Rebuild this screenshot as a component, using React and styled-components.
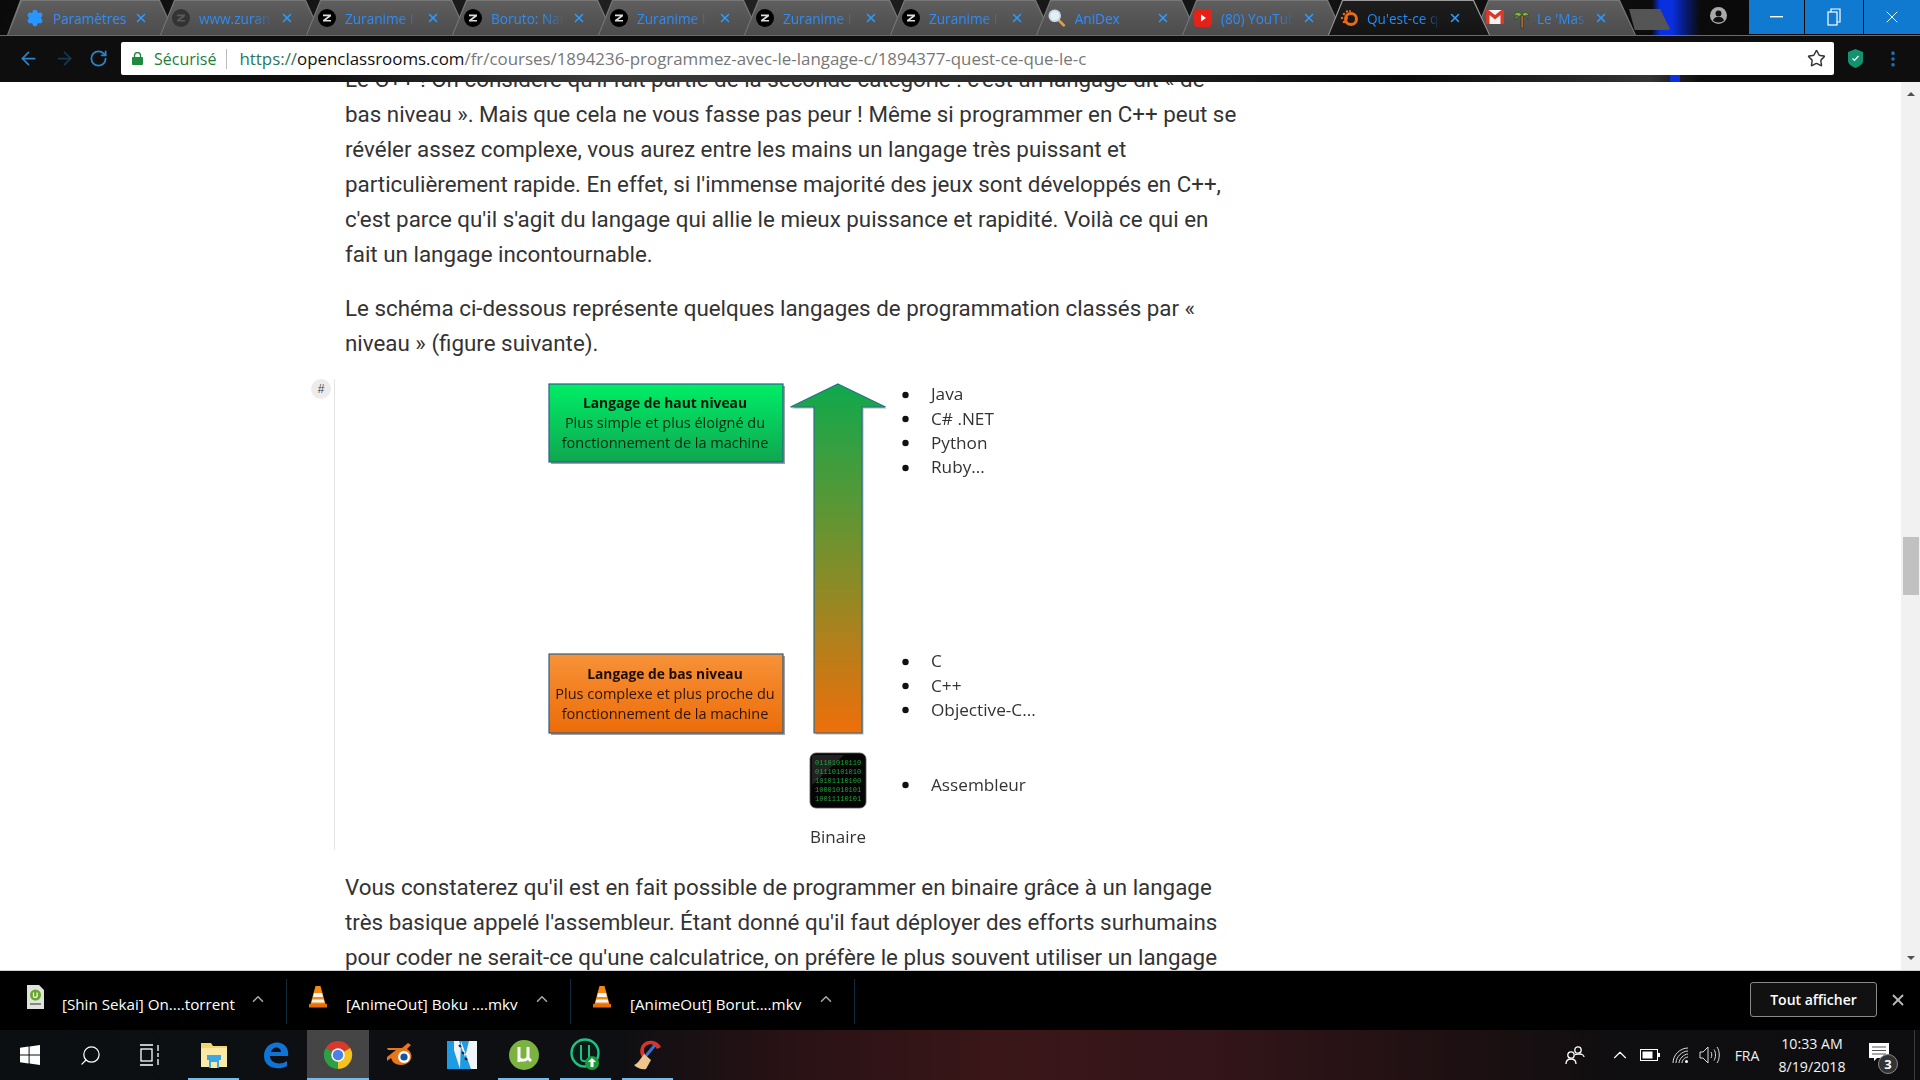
import React from "react";
import styled, { createGlobalStyle } from "styled-components";
import { ArrowLeft, ArrowRight, RotateCw, Star, EllipsisVertical, X, ChevronUp, Settings, Search } from "lucide-react";

const Global = createGlobalStyle`
  html, body { margin: 0; padding: 0; background: #000; overflow: hidden; }
  #root { width: 1920px; height: 1080px; }
  * { box-sizing: border-box; }
`;

const Screen = styled.div`
  width: 1920px; height: 1080px; display: flex; flex-direction: column; overflow: hidden;
  font-family: "Open Sans", "Liberation Sans", sans-serif;
`;

const TitleBar = styled.div`
  height: 36px; display: flex; align-items: flex-start; flex: none;
  background:
    linear-gradient(90deg, transparent 1652px, #0a2fe0 1660px, #0a2fe0 1672px, #071c80 1684px, transparent 1700px),
    linear-gradient(115deg, #0a0a0a 0, #222 35%, #151515 60%, #0c0c0c 85%, #060606 100%);
  border-bottom: 1px solid #6a6a6a;
`;
const TabStrip = styled.div`display: flex; padding-left: 14px; flex: none;`;
const TabShape = styled.div`
  position: relative; width: 162px; height: 35px; margin-right: -16px; flex: none;
  display: flex; align-items: center; padding: 1px 0 0 12px;
  background: ${p => p.$active ? "#9a9a9a" : "#777"};
  clip-path: polygon(0 100%, 14px 0, calc(100% - 16px) 0, 100% 100%);
  z-index: ${p => p.$active ? 2 : 1};
  &::before {
    content: ""; position: absolute; inset: 1px 1px 0 1px;
    background: ${p => p.$active ? "linear-gradient(#1d1d1d,#141414)" : "linear-gradient(#5e5e5e,#4c4c4c)"};
    clip-path: polygon(0 100%, 14px 0, calc(100% - 16px) 0, 100% 100%);
  }
  & > * { position: relative; }
  &:first-child { margin-left: -7px; width: 169px; padding-left: 19px; clip-path: polygon(0 100%, 13px 0, calc(100% - 16px) 0, 100% 100%); }
`;
const FavSlot = styled.span`
  width: ${p => p.$wide ? 45 : 18}px; height: 20px; display: flex; align-items: center; justify-content: center; flex: none;
`;
const TabTitle = styled.span`
  width: ${p => p.$wide ? 54 : 78}px; margin-left: ${p => p.$wide ? 6 : 9}px; overflow: hidden; white-space: nowrap; font-size: 13.6px; flex: none;
  color: ${p => p.$active ? "#1f8cff" : "#2f8cf5"};
  ${p => p.$fits ? "" : `
    -webkit-mask-image: linear-gradient(90deg, #000 70%, transparent 94%);
    mask-image: linear-gradient(90deg, #000 70%, transparent 94%);
  `}
`;
const TabClose = styled.span`margin-left: 3px; display: flex; color: #2b9bff;`;
const NewTab = styled.div`
  width: 41px; height: 21px; margin: 9px 0 0 9px; background: #555; flex: none;
  clip-path: polygon(0 0, 76% 0, 100% 95%, 95% 100%, 14% 100%);
`;
const TitleSpacer = styled.div`flex: 1;`;
const Profile = styled.div`width: 17px; height: 17px; margin: 7px 22px 0 0; flex: none;`;
const WindowControls = styled.div`display: flex; height: 34px; flex: none; gap: 1px;`;
const WinButton = styled.div`
  width: ${p => p.$w}px; height: 34px; background: #0f7ad0; color: #eef6fc;
  display: flex; align-items: center; justify-content: center;
`;

const Toolbar = styled.div`
  height: 46px; flex: none; padding: 6px 0 0 10px; display: flex; align-items: flex-start;
  background:
    linear-gradient(90deg, transparent 1670px, #0a2fe0 1670px, #0a2fe0 1680px, transparent 1680px) 0 39px / 100% 7px no-repeat,
    linear-gradient(90deg, transparent 300px, #3a3a3a 600px, #2a2a2a 1000px, #0a0a0a 1400px, #333 1650px, transparent 1700px) 0 39px / 100% 7px no-repeat,
    #0e0e0e;
`;
const NavButton = styled.div`
  width: ${p => p.$w}px; height: 33px; display: flex; align-items: center; justify-content: center;
  color: ${p => p.$dim ? "#123a55" : "#2a84cc"}; flex: none;
`;
const Omnibox = styled.div`
  width: 1713px; margin-left: 7px; height: 33px; background: #fff; border-radius: 2px; flex: none;
  display: flex; align-items: center; padding: 0 8px 0 11px; font-size: 16px;
`;
const Secure = styled.span`display: flex; align-items: center; gap: 11px; color: #1d7f3e; font-size: 16px;`;
const OmniDivider = styled.span`width: 1px; height: 20px; background: #bbb; margin: 0 12px 0 10px;`;
const Url = styled.span`flex: 1; color: #777; white-space: nowrap; font-size: 16.9px;`;
const UrlProto = styled.span`color: #1f7a5c;`;
const UrlHost = styled.span`color: #111;`;
const ToolEnd = styled.div`display: flex; align-items: center; height: 33px; flex: none; margin-left: 14px;`;
const Dots = styled.span`display: flex; color: #1c6fb4; margin-left: 20px;`;

const PageArea = styled.div`flex: 1; min-height: 0; display: flex; background: #fff; overflow: hidden;`;
const Article = styled.div`flex: 1; margin-top: -20px; padding-left: 334px; color: #333;`;
const Paragraph = styled.p`
  margin: 0 0 ${p => p.$tight ? 18 : 19}px; padding-left: 11px; font: 400 22.37px/35px Roboto, "Open Sans", sans-serif;
  white-space: nowrap;
`;
const Figure = styled.figure`
  position: relative; margin: 0 0 20px; height: 471px; border-left: 1px solid #e4e4e4;
  svg { display: block; filter: blur(0.35px); }
`;
const HashBubble = styled.span`
  position: absolute; left: -24px; top: 0; width: 20px; height: 20px; border-radius: 50%;
  background: #ececec; color: #444; font: 12px/20px "Liberation Sans", sans-serif; text-align: center;
`;
const Scrollbar = styled.div`width: 19px; flex: none; background: #f1f1f1; display: flex; flex-direction: column; align-items: center;`;
const ScrollArrow = styled.div`
  height: 24px; flex: none; display: flex; align-items: center; justify-content: center;
  &::before {
    content: ""; border-left: 4px solid transparent; border-right: 4px solid transparent;
    ${p => p.$down ? "border-top: 4px solid #505050;" : "border-bottom: 4px solid #505050;"}
  }
`;
const ScrollTrack = styled.div`flex: 1; width: 100%; padding: 431px 1px 0 2px;`;
const ScrollThumb = styled.div`height: 58px; background: #c1c1c1;`;

const DownloadBar = styled.div`
  height: 60px; flex: none; background: #000; border-top: 1px solid #cfcfcf; display: flex; align-items: center; padding: 0 13px 0 3px;
`;
const DownloadItem = styled.div`
  width: 284px; height: 45px; border-right: 1px solid #0f2b3d; flex: none; display: flex; align-items: center;
  padding-left: 21px; color: #fff; font-size: 15.2px; white-space: nowrap; margin-top: 1px;
`;
const FileIcon = styled.span`width: 22px; height: 24px; display: flex; margin-right: 16px; flex: none; margin-top: -8px;`;
const FileName = styled.span`width: 174px; flex: none; position: relative; top: 3px;`;
const FileCaret = styled.span`display: flex; color: #aaa; margin-left: 13px; margin-top: -5px;`;
const DownloadSpacer = styled.div`flex: 1;`;
const ShowAll = styled.div`
  width: 127px; height: 35px; border: 1px solid #8a8a8a; border-radius: 3px; background: #111; color: #fff;
  font-size: 14px; font-weight: 600; display: flex; align-items: center; justify-content: center; margin-top: -2px;
`;
const BarClose = styled.span`display: flex; color: #bbb; margin-left: 12px; margin-top: -2px;`;

const Taskbar = styled.div`
  height: 50px; flex: none; display: flex; align-items: center; color: #fff;
  background: linear-gradient(90deg, #0c0f12 0, #0e0f12 620px, #2a1215 800px, #3a1618 1000px, #34151a 1200px, #1e1012 1450px, #0f0e10 1620px, #0e0e10 100%);
`;
const SysButton = styled.div`width: 60px; height: 50px; display: flex; align-items: center; justify-content: center; flex: none;`;
const AppCell = styled.div`
  width: 62px; height: 50px; flex: none; display: flex; align-items: center; justify-content: center; position: relative;
  background: ${p => p.$active ? "#454545" : "transparent"};
  &::after {
    content: ""; position: absolute; bottom: 0; height: 2px; background: #76b9ed;
    left: ${p => p.$active ? 0 : 5}px; right: ${p => p.$active ? 0 : 6}px;
    display: ${p => p.$open ? "block" : "none"};
  }
`;
const AppsStart = styled.div`width: 3px; flex: none;`;
const TaskSpacer = styled.div`flex: 1;`;
const Tray = styled.div`display: flex; align-items: center; height: 50px; flex: none; border-right: 1px solid #3c3c3c; margin-right: 5px;`;
const TrayIcon = styled.span`width: ${p => p.$w}px; display: flex; justify-content: center; flex: none;`;
const Lang = styled.span`width: 44px; text-align: center; font-size: 14px; flex: none; color: #f0f0f0;`;
const Clock = styled.div`width: 86px; flex: none; text-align: center; font-size: 14.2px; line-height: 23px; color: #f4f4f4; white-space: nowrap;`;
const Notif = styled.span`width: 59px; height: 50px; position: relative; flex: none; display: flex; align-items: center; justify-content: center;`;
const NotifBadge = styled.span`
  position: absolute; left: 23px; top: 24px; width: 20px; height: 20px; border-radius: 50%;
  background: #333; border: 1px solid #888; color: #fff; font-size: 13px; font-weight: 700; line-height: 18px; text-align: center;
`;

const ZFav = () => (
  <svg width="18" height="18" viewBox="0 0 18 18"><circle cx="9" cy="9" r="9" fill="#000"/><path d="M5 5.500h8v1.700L8 11h5v1.600H5V11l5-3.800H5z" fill="#ddd"/></svg>
);
const ZDim = () => (
  <svg width="18" height="18" viewBox="0 0 18 18"><circle cx="9" cy="9" r="9" fill="#333"/><path d="M5 5.500h8v1.700L8 11h5v1.600H5V11l5-3.800H5z" fill="#5a5a5a"/></svg>
);
const GearFav = () => <Settings size={18} color="#2b95ff" fill="#2b95ff" strokeWidth={2} />;
const MagFav = () => (
  <svg width="20" height="20" viewBox="0 0 20 20"><path d="M10.500 11l7 7" stroke="#d9a441" strokeWidth="3" strokeLinecap="round"/><circle cx="7.500" cy="7.500" r="6" fill="#dff0fb" stroke="#cfd6dc" strokeWidth="2"/></svg>
);
const YtFav = () => (
  <svg width="18" height="18" viewBox="0 0 18 18"><rect width="18" height="18" rx="4" fill="#e62117"/><path d="M7 5.500l5 3.500-5 3.500z" fill="#fff"/></svg>
);
const OcFav = () => (
  <svg width="18" height="18" viewBox="0 0 18 18">
    <circle cx="11" cy="10" r="5.500" fill="none" stroke="#e9691a" strokeWidth="3"/>
    <circle cx="4" cy="5" r="1.300" fill="#e9691a"/><circle cx="2" cy="9" r="1.200" fill="#e9691a"/><circle cx="4" cy="13" r="1.300" fill="#e9691a"/><circle cx="6.500" cy="9" r="1.600" fill="#e9691a"/><circle cx="7" cy="2.500" r="1.200" fill="#e9691a"/><circle cx="10" cy="2" r="1" fill="#e9691a"/>
  </svg>
);
const MailFav = () => (
  <svg width="45" height="22" viewBox="0 0 45 22">
    <rect x="0" y="3" width="18" height="14" fill="#f2f2f2"/><path d="M0 3v14h3.500V8L9 12.500 14.500 8v9H18V3h-2.500L9 8 2.500 3z" fill="#d8392b"/>
    <rect x="35" y="8" width="2.500" height="13" fill="#a96a2a" stroke="#222" strokeWidth=".5"/><path d="M36 8c-3-4-7-3-8 1 2-1 3-1 4 0-2 0-3 2-3 4 2-3 4-4 7-5 3 1 5 2 6 5 0-2-1-4-3-4 1-1 3-1 4 0-1-4-5-5-7-1z" fill="#7cc02f" stroke="#222" strokeWidth=".4"/>
  </svg>
);

const tabs = [
  { t: "Paramètres", i: <GearFav />, fits: true },
  { t: "www.zuranime", i: <ZDim /> },
  { t: "Zuranime I", i: <ZFav /> },
  { t: "Boruto: Naruto", i: <ZFav /> },
  { t: "Zuranime I", i: <ZFav /> },
  { t: "Zuranime I", i: <ZFav /> },
  { t: "Zuranime I", i: <ZFav /> },
  { t: "AniDex", i: <MagFav />, fits: true },
  { t: "(80) YouTube", i: <YtFav /> },
  { t: "Qu'est-ce que", i: <OcFav />, active: true },
  { t: "Le 'Mas", i: <MailFav />, wide: true },
];

const WinLogo = () => (
  <svg width="20" height="20" viewBox="0 0 20 20" fill="#fff"><path d="M0 2.800L8.600 1.600v7.900H0zM9.600 1.500L20 0v9.500H9.600zM0 10.500h8.600v7.900L0 17.200zM9.600 10.500H20V20L9.600 18.500z"/></svg>
);
const TaskView = () => (
  <svg width="22" height="22" viewBox="0 0 22 22" fill="none" stroke="#fff" strokeWidth="1.300"><path d="M1 1h13M1 21h13"/><rect x="2" y="5" width="11" height="12"/><path d="M19 1v6M19 9v4M19 15v6"/></svg>
);
const Explorer = () => (
  <svg width="28" height="30" viewBox="0 0 28 30"><path d="M1 3h10l2 3h14v21H1z" fill="#f6d56c"/><path d="M1 8h26v19H1z" fill="#fbe9a6"/><rect x="9" y="19" width="10" height="9" fill="#39a7e8"/><rect x="7" y="15" width="14" height="5" fill="#39a7e8"/><rect x="11" y="22" width="6" height="6" fill="#fbe9a6"/></svg>
);
const Edge = () => (
  <svg width="26" height="28" viewBox="0 0 26 28"><path d="M25 15H7c0 7 10 10 17 5v5c-9 5-23 2-23-10C1 5 10 0 17 2c6 1 9 7 8 13zM18 11c0-6-9-6-10 0z" fill="#0f74d6" fillRule="evenodd"/></svg>
);
const Chrome = () => (
  <svg width="30" height="34" viewBox="0 0 32 32"><path d="M16 16L3 8.500A15 15 0 0 1 29 8.500z" fill="#d9392c"/><path d="M16 16L3 8.500A15 15 0 0 0 16 31z" fill="#2f9e45"/><path d="M16 16L29 8.500A15 15 0 0 1 16 31z" fill="#f3c221"/><circle cx="16" cy="16" r="7.200" fill="#fff"/><circle cx="16" cy="16" r="5.600" fill="#4a80e8"/></svg>
);
const Blender = () => (
  <svg width="30" height="26" viewBox="0 0 30 26"><path d="M2 15l9-7H3l-1-2h15l6-5 3 2-4 4c5 3 6 9 2 13-4 4-12 4-16 0l-2-4-4 3z" fill="#e8761b"/><circle cx="19" cy="15" r="6" fill="#fff"/><circle cx="19" cy="15" r="3.600" fill="#14569c"/></svg>
);
const MovieM = () => (
  <svg width="30" height="28" viewBox="0 0 30 28"><rect width="30" height="28" fill="#1d9be5"/><path d="M7 0h5l6 16 4-16h8v28h-6L14 0l-1 28H7z" fill="#eef4f7"/><path d="M4 0l9 28H5L0 8V0z" fill="#1d9be5"/><path d="M12 4l2 2M15 11l2 2M18 17l2 2" stroke="#222" strokeWidth="2"/></svg>
);
const UTorrent = () => (
  <svg width="30" height="30" viewBox="0 0 30 30"><circle cx="15" cy="15" r="15" fill="#7cb340"/><path d="M10 7v15M10 18c1 3 8 3 9-1V7M19 18l3 3" stroke="#fff" strokeWidth="3" fill="none"/></svg>
);
const UWeb = () => (
  <svg width="32" height="34" viewBox="0 0 32 34"><circle cx="15" cy="15" r="13.500" fill="#0a1a17" stroke="#1ec285" strokeWidth="2.400"/><path d="M11 7v14c1 3 7 3 8 0V7" stroke="#1ec285" strokeWidth="2" fill="none"/><circle cx="22" cy="25" r="7" fill="#1a9c3d"/><path d="M22 20l4 4h-2.500v5h-3v-5H18z" fill="#fff"/></svg>
);
const CCleaner = () => (
  <svg width="30" height="32" viewBox="0 0 30 32"><path d="M28 8C24 0 13 0 9 6c-3 5-2 11 2 14l3-3c-3-2-4-6-2-9 3-4 9-4 12 2z" fill="#d5352b"/><path d="M22 6L12 18" stroke="#3a6fd0" strokeWidth="3"/><path d="M11 15l7 6-5 9c-4 1-9-1-12-4 3-1 6-5 10-11z" fill="#efc58e"/></svg>
);
const TorrentFile = () => (
  <svg width="22" height="24" viewBox="0 0 22 24"><path d="M3 0h12l5 5v19H3z" fill="#dfe3dc"/><circle cx="11.500" cy="10" r="5.500" fill="#6aa52e"/><path d="M9.500 7.500v4c.5 1.200 3 1.200 3.600 0v-4" stroke="#fff" fill="none" strokeWidth="1.200"/><rect x="6" y="18" width="11" height="2" fill="#888"/></svg>
);
const VlcCone = () => (
  <svg width="20" height="24" viewBox="0 0 20 24"><path d="M7.500 1h5l5 18H2.500z" fill="#f08a12"/><path d="M6 8h8l1 4H5zM4.500 14.500h11l1 3h-13z" fill="#f4f4f4"/><path d="M1 19h18v3.500H1z" fill="#e56e0b"/></svg>
);
const LockGlyph = () => (
  <svg width="11" height="13" viewBox="0 0 11 13"><path d="M2.500 5V3.500a3 3 0 0 1 6 0V5" fill="none" stroke="#1d8a3e" strokeWidth="1.400"/><rect y="5" width="11" height="8" rx="1" fill="#1d8a3e"/></svg>
);
const PeopleIcon = () => (
  <svg width="20" height="20" viewBox="0 0 20 20" fill="none" stroke="#fff" strokeWidth="1.300"><circle cx="13" cy="5" r="3.200"/><circle cx="6" cy="10" r="3.200"/><path d="M1 19c0-3 2-5 5-5s5 2 5 5M10 9.500c2 0 3.500-.5 4.500-.5 2.500 0 4.500 1.500 4.500 3"/></svg>
);
const Battery = () => (
  <svg width="20" height="12" viewBox="0 0 20 12"><rect x=".5" y=".5" width="17" height="11" fill="none" stroke="#fff"/><rect x="2.500" y="2.500" width="10" height="7" fill="#fff"/><rect x="18" y="4" width="2" height="4" fill="#fff"/></svg>
);
const Wifi = () => (
  <svg width="18" height="18" viewBox="0 0 18 18" fill="none" stroke="#ddd" strokeWidth="1"><path d="M1 17C1 9 8 2 16 2M4 17c0-6 6-12 12-12M7 17c0-4 5-9 9-9M10 17c0-3 3-6 6-6"/><circle cx="14.500" cy="15.500" r="1.500" fill="#fff" stroke="none"/></svg>
);
const Speaker = () => (
  <svg width="22" height="18" viewBox="0 0 22 18" fill="none" stroke="#ddd" strokeWidth="1"><path d="M1 6h3l5-5v16l-5-5H1zM12 6c1 2 1 4 0 6M15 3.500c2 3 2 8 0 11M18 1c3 4 3 12 0 16"/></svg>
);
const NotifGlyph = () => (
  <svg width="20" height="18" viewBox="0 0 20 18" style={{marginTop:-6,marginLeft:-11}}><path d="M0 0h20v15H8l-3 3v-3H0z" fill="#fff"/><path d="M3 4h14M3 7.500h14M3 11h14" stroke="#555" strokeWidth="1"/></svg>
);
const ProfileGlyph = () => (
  <svg width="17" height="17" viewBox="0 0 20 20"><circle cx="10" cy="10" r="10" fill="#aaa"/><circle cx="10" cy="7.500" r="3.500" fill="#111"/><path d="M3.500 16c1-3.500 4-4.500 6.500-4.500s5.500 1 6.500 4.500c-3 3-10 3-13 0z" fill="#111"/></svg>
);
const Shield = () => (
  <svg width="15" height="19" viewBox="0 0 15 19"><path d="M7.500 0L15 3v9c0 3-4 5.500-7.500 7C4 17.500 0 15 0 12V3z" fill="#13936f"/><path d="M4.500 9.500l2 2 4-4.500" stroke="#fff" strokeWidth="1.200" fill="none"/></svg>
);
const TilesMax = () => (
  <svg width="14" height="18" viewBox="0 0 14 18" fill="none" stroke="#fff" strokeWidth="1.200"><rect x="1" y="4" width="9" height="13"/><path d="M4 4V1h9v13h-3"/></svg>
);

const Diagram = () => (
  <svg width="720" height="471" viewBox="335 379 720 471" fontFamily="'Open Sans', sans-serif">
    <defs>
      <linearGradient id="gb" x1="0" y1="0" x2="0" y2="1"><stop offset="0" stopColor="#00ee66"/><stop offset="1" stopColor="#0fa650"/></linearGradient>
      <linearGradient id="ob" x1="0" y1="0" x2="0" y2="1"><stop offset="0" stopColor="#f79238"/><stop offset="1" stopColor="#ec6c08"/></linearGradient>
      <linearGradient id="ar" gradientUnits="userSpaceOnUse" x1="0" y1="384" x2="0" y2="733"><stop offset="0" stopColor="#0ea94c"/><stop offset=".52" stopColor="#7f8e2a"/><stop offset="1" stopColor="#ee6f0a"/></linearGradient>
    </defs>
    <rect x="551" y="386" width="234" height="78" fill="#a0a0a0"/>
    <rect x="549" y="384" width="234" height="78" fill="url(#gb)" stroke="#2a5f8c" strokeWidth="1.200"/>
    <g textAnchor="middle" fill="#052a12" fontSize="14.500">
      <text x="665" y="408" fontWeight="700" fontSize="13.800" fill="#03180a">Langage de haut niveau</text>
      <text x="665" y="428">Plus simple et plus éloigné du</text>
      <text x="665" y="448">fonctionnement de la machine</text>
    </g>
    <rect x="551" y="656" width="234" height="79" fill="#a0a0a0"/>
    <rect x="549" y="654" width="234" height="79" fill="url(#ob)" stroke="#2a5f8c" strokeWidth="1.200"/>
    <g textAnchor="middle" fill="#2f1500" fontSize="14.500">
      <text x="665" y="679" fontWeight="700" fontSize="13.800" fill="#1e0d00">Langage de bas niveau</text>
      <text x="665" y="699">Plus complexe et plus proche du</text>
      <text x="665" y="719">fonctionnement de la machine</text>
    </g>
    <path d="M838 384L885.500 407H862V733H814V407H790.500z" transform="translate(1.500 1.500)" fill="#b5b5b5"/>
    <path d="M838 384L885.500 407H862V733H814V407H790.500z" fill="url(#ar)" stroke="#2a6f8f" strokeWidth="1.200"/>
    <rect x="810" y="753" width="56" height="55" rx="6" fill="#050505" stroke="#555" strokeWidth=".8"/>
    <path d="M812 755h32l-32 30z" fill="#222"/>
    <g fill="#1fa53a" fontSize="7" fontFamily="'Liberation Mono', monospace">
      <text x="815" y="765">01101010110</text>
      <text x="815" y="774">01110101010</text>
      <text x="815" y="783">10101110100</text>
      <text x="815" y="792">10001010101</text>
      <text x="815" y="801">10011110101</text>
    </g>
    <text x="838" y="843" textAnchor="middle" fill="#333" fontSize="17">Binaire</text>
    <g fill="#111">
      {[395, 419, 443, 468, 662, 686, 710, 785].map(y => <circle key={y} cx="905.500" cy={y} r="3.200" />)}
    </g>
    <g fill="#333" fontSize="17.200">
      <text x="931" y="400">Java</text>
      <text x="931" y="425">C# .NET</text>
      <text x="931" y="449">Python</text>
      <text x="931" y="473">Ruby...</text>
      <text x="931" y="667">C</text>
      <text x="931" y="692">C++</text>
      <text x="931" y="716">Objective-C...</text>
      <text x="931" y="791">Assembleur</text>
    </g>
  </svg>
);

const downloads = [
  { n: "[Shin Sekai] On....torrent", i: <TorrentFile /> },
  { n: "[AnimeOut] Boku ....mkv", i: <VlcCone /> },
  { n: "[AnimeOut] Borut....mkv", i: <VlcCone /> },
];

const apps = [
  { i: <Explorer />, open: true },
  { i: <Edge /> },
  { i: <Chrome />, open: true, active: true },
  { i: <Blender /> },
  { i: <MovieM /> },
  { i: <UTorrent />, open: true },
  { i: <UWeb />, open: true },
  { i: <CCleaner />, open: true },
];

export default function App() {
  return (
    <Screen>
      <Global />
      <TitleBar>
        <TabStrip>
          {tabs.map((tab, i) => (
            <TabShape key={i} $active={tab.active}>
              <FavSlot $wide={tab.wide}>{tab.i}</FavSlot>
              <TabTitle $wide={tab.wide} $active={tab.active} $fits={tab.fits}>{tab.t}</TabTitle>
              <TabClose><X size={14} strokeWidth={2.600} /></TabClose>
            </TabShape>
          ))}
        </TabStrip>
        <NewTab />
        <TitleSpacer />
        <Profile><ProfileGlyph /></Profile>
        <WindowControls>
          <WinButton $w={55}><svg width="13" height="2"><rect width="13" height="1.400" fill="#fff" /></svg></WinButton>
          <WinButton $w={58}><TilesMax /></WinButton>
          <WinButton $w={56}><X size={20} strokeWidth={1.200} /></WinButton>
        </WindowControls>
      </TitleBar>
      <Toolbar>
        <NavButton $w={36}><ArrowLeft size={21} strokeWidth={2} /></NavButton>
        <NavButton $w={37} $dim><ArrowRight size={21} strokeWidth={2} /></NavButton>
        <NavButton $w={31}><RotateCw size={19} strokeWidth={2.200} /></NavButton>
        <Omnibox>
          <Secure><LockGlyph />Sécurisé</Secure>
          <OmniDivider />
          <Url><UrlProto>https://</UrlProto><UrlHost>openclassrooms.com</UrlHost>/fr/courses/1894236-programmez-avec-le-langage-c/1894377-quest-ce-que-le-c</Url>
          <Star size={19} color="#333" strokeWidth={1.800} />
        </Omnibox>
        <ToolEnd>
          <Shield />
          <Dots><EllipsisVertical size={20} strokeWidth={2.400} /></Dots>
        </ToolEnd>
      </Toolbar>
      <PageArea>
        <Article>
          <Paragraph>
            Le C++ ! On considère qu'il fait partie de la seconde catégorie : c'est un langage dit « de<br />
            bas niveau ». Mais que cela ne vous fasse pas peur ! Même si programmer en C++ peut se<br />
            révéler assez complexe, vous aurez entre les mains un langage très puissant et<br />
            particulièrement rapide. En effet, si l'immense majorité des jeux sont développés en C++,<br />
            c'est parce qu'il s'agit du langage qui allie le mieux puissance et rapidité. Voilà ce qui en<br />
            fait un langage incontournable.
          </Paragraph>
          <Paragraph $tight>
            Le schéma ci-dessous représente quelques langages de programmation classés par «<br />
            niveau » (figure suivante).
          </Paragraph>
          <Figure>
            <HashBubble>#</HashBubble>
            <Diagram />
          </Figure>
          <Paragraph>
            Vous constaterez qu'il est en fait possible de programmer en binaire grâce à un langage<br />
            très basique appelé l'assembleur. Étant donné qu'il faut déployer des efforts surhumains<br />
            pour coder ne serait-ce qu'une calculatrice, on préfère le plus souvent utiliser un langage
          </Paragraph>
        </Article>
        <Scrollbar>
          <ScrollArrow />
          <ScrollTrack><ScrollThumb /></ScrollTrack>
          <ScrollArrow $down />
        </Scrollbar>
      </PageArea>
      <DownloadBar>
        {downloads.map((d, i) => (
          <DownloadItem key={i}>
            <FileIcon>{d.i}</FileIcon>
            <FileName>{d.n}</FileName>
            <FileCaret><ChevronUp size={18} strokeWidth={2} /></FileCaret>
          </DownloadItem>
        ))}
        <DownloadSpacer />
        <ShowAll>Tout afficher</ShowAll>
        <BarClose><X size={18} strokeWidth={2.400} /></BarClose>
      </DownloadBar>
      <Taskbar>
        <SysButton><WinLogo /></SysButton>
        <SysButton><Search size={23} strokeWidth={1.300} style={{ transform: "scaleX(-1)" }} /></SysButton>
        <SysButton><TaskView /></SysButton>
        <AppsStart />
        {apps.map((a, i) => (
          <AppCell key={i} $open={a.open} $active={a.active}>{a.i}</AppCell>
        ))}
        <TaskSpacer />
        <Tray>
          <TrayIcon $w={64}><PeopleIcon /></TrayIcon>
          <TrayIcon $w={26}><ChevronUp size={22} strokeWidth={1.200} /></TrayIcon>
          <TrayIcon $w={34}><Battery /></TrayIcon>
          <TrayIcon $w={28}><Wifi /></TrayIcon>
          <TrayIcon $w={30}><Speaker /></TrayIcon>
          <Lang>FRA</Lang>
          <Clock>10:33 AM<br />8/19/2018</Clock>
          <Notif><NotifGlyph /><NotifBadge>3</NotifBadge></Notif>
        </Tray>
      </Taskbar>
    </Screen>
  );
}
